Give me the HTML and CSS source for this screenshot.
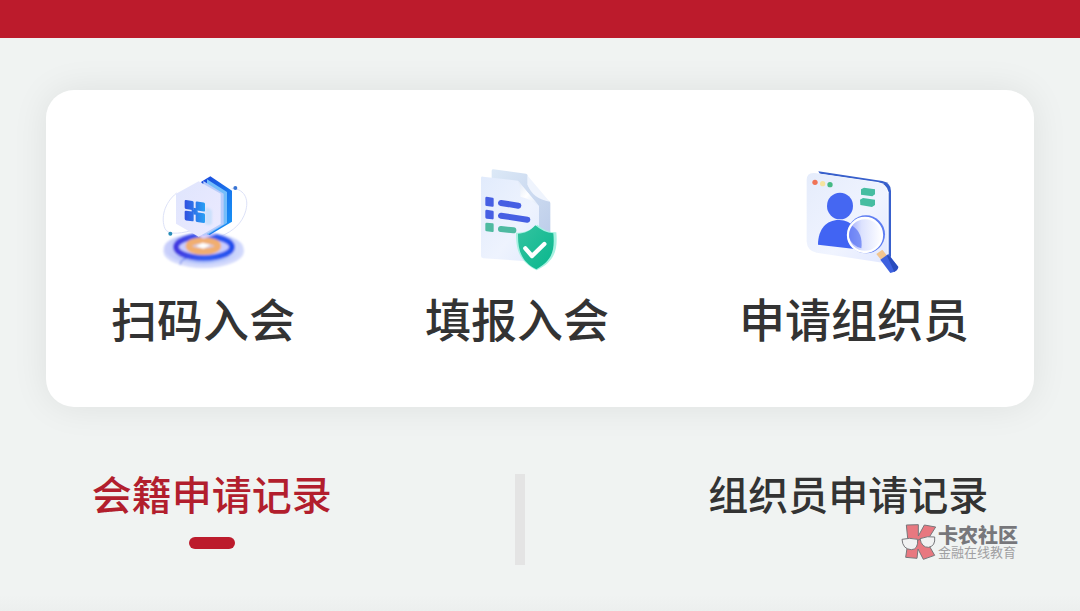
FILE: index.html
```html
<!DOCTYPE html>
<html lang="zh-CN">

<head>
  <meta charset="UTF-8">
  <meta name="viewport" content="width=device-width, initial-scale=1.0">
  <title>入会申请</title>
  <link rel="stylesheet" href="styles.css">
</head>

<body>
  <header class="topbar"></header>

  <main>
    <nav class="menu">
      <a class="menu-item" href="#scan">
        <svg class="menu-icon" viewBox="-6 0 330 330" aria-hidden="true">
          <defs>
            <linearGradient id="disc" x1="0" x2="1">
              <stop offset="0" stop-color="#cbd0fb" />
              <stop offset=".5" stop-color="#a9bdfb" />
              <stop offset="1" stop-color="#d3dafc" />
            </linearGradient>
            <linearGradient id="ring" x1="0" x2="1">
              <stop offset="0" stop-color="#4338e0" />
              <stop offset=".5" stop-color="#3560f0" />
              <stop offset="1" stop-color="#2450ee" />
            </linearGradient>
            <linearGradient id="face" x1="0" y1="0" x2="1" y2="1">
              <stop offset="0" stop-color="#dfe5fd" />
              <stop offset="1" stop-color="#eceaff" />
            </linearGradient>
            <linearGradient id="side" x1="0" y1="0" x2="1" y2="1">
              <stop offset="0" stop-color="#1b45dc" />
              <stop offset="1" stop-color="#179af8" />
            </linearGradient>
            <linearGradient id="tiles" gradientUnits="userSpaceOnUse" x1="104" y1="0" x2="165" y2="0">
              <stop offset="0" stop-color="#3150e0" />
              <stop offset="1" stop-color="#28a0f4" />
            </linearGradient>
            <filter id="soft" x="-20%" y="-20%" width="140%" height="140%">
              <feGaussianBlur stdDeviation="3" />
            </filter>
          </defs>
          <path d="M80 84C42 114 32 160 45 191c8 17 38 17 78 6M245 70c42 2 56 38 37 82-14 32-42 53-88 69" fill="none" stroke="#dde2f8" stroke-width="3" />
          <g filter="url(#soft)">
            <ellipse cx="161" cy="259" rx="121" ry="50" fill="#d4dafc" />
            <ellipse cx="161" cy="250" rx="120" ry="46" fill="url(#disc)" />
            <ellipse cx="162" cy="246" rx="84" ry="33" fill="#c9ccff" stroke="url(#ring)" stroke-width="18" />
            <ellipse cx="160" cy="243" rx="44" ry="17" fill="#d7c9dd" stroke="#f1ae70" stroke-width="19" />
            <path d="M138 243l20-10 23 7-21 11z" fill="#fff" />
            <path d="M91 299c0-12 9-17 22-20" fill="none" stroke="#3b5ce8" stroke-width="3" />
            <path d="M136 207h64l-40 14z" fill="#d6cfff" />
          </g>
          <path d="M181 34l65 43v93l-67 40-25-12V50z" fill="url(#side)" />
          <path d="M171 43l60 38v93l-59 36z" fill="#74bdfa" />
          <path d="M160 48l61 38v92l-61 35z" fill="#b8ccfb" />
          <path d="M146 49l66 37v91l-66 38-68-39V86z" fill="url(#face)" />
          <path d="M166 127q18 3 20 12v38q-10 7-21 0z" fill="#cbe0fc" filter="url(#soft)" />
          <g fill="url(#tiles)" transform="skewY(8) translate(0 -17)">
            <rect x="104" y="107" width="27" height="27" rx="4" />
            <rect x="137" y="107" width="28" height="27" rx="4" />
            <rect x="104" y="139" width="27" height="29" rx="4" />
            <rect x="137" y="139" width="28" height="29" rx="4" />
            <path d="M125 133h18v8h-18z" />
            <path d="M130 127h9v20h-9z" />
          </g>
          <circle cx="256" cy="69" r="6" fill="#3974d3" />
          <circle cx="61" cy="206" r="6" fill="#288db8" />
        </svg>
        <span>扫码入会</span>
      </a>

      <a class="menu-item" href="#fill">
        <svg class="menu-icon" viewBox="-9 15 330 330" aria-hidden="true">
          <defs>
            <linearGradient id="paper" x1="0" y1="0" x2="1" y2="1">
              <stop offset="0" stop-color="#e1ebfc" />
              <stop offset=".6" stop-color="#eef3fe" />
              <stop offset="1" stop-color="#e2ebfd" />
            </linearGradient>
            <linearGradient id="back" x1="0" y1="0" x2="1" y2="1">
              <stop offset="0" stop-color="#dce9f7" />
              <stop offset="1" stop-color="#bccce9" />
            </linearGradient>
            <linearGradient id="shield" x1="0" y1="0" x2="1" y2="1">
              <stop offset="0" stop-color="#35c3a0" />
              <stop offset="1" stop-color="#08b78d" />
            </linearGradient>
            <linearGradient id="fold" x1="0" y1="0" x2="1" y2="1">
              <stop offset="0" stop-color="#dfe8f7" />
              <stop offset=".5" stop-color="#ffffff" />
              <stop offset="1" stop-color="#dce7f8" />
            </linearGradient>
          </defs>
          <path d="M80 32q0-4 5-4l98 13q5 1 5 6v28q20 38 64 48 4 2 4 7v112L80 212z" fill="url(#back)" />
          <path d="M188 47l66 78q-50-8-66-50z" fill="#eff4fd" />
          <path d="M48 54q0-5 6-4l105 12 63 76v168L55 295q-7-1-7-7z" fill="url(#paper)" />
          <path d="M159 62q9 28 7 48 28 5 56 28z" fill="url(#fold)" />
          <g fill="#465fe3">
            <path d="M61 114q0-4 4-4l18 3q3 0 3 4v20q0 4-4 3l-17-2q-4 0-4-4z" />
            <path d="M61 153q0-4 4-4l18 3q3 0 3 4v19q0 4-4 3l-17-2q-4 0-4-4z" />
          </g>
          <path d="M61 192q0-4 4-4l18 2q3 0 3 4v19q0 4-4 3l-17-2q-4 0-4-4z" fill="#4ebaa1" />
          <g fill="none" stroke-linecap="round" stroke-width="18">
            <path d="M108 129l52 8M108 167l79 12" stroke="#465fe3" />
            <path d="M108 207l37 4" stroke="#4ebaa1" />
          </g>
          <path d="M217 194q25 23 57 23c5 56-7 88-59 114-47-24-63-55-62-113 25 0 46-8 64-24z" fill="#a7f1e1" />
          <path d="M211 196q24 22 54 24c5 54-5 82-51 108-43-22-56-54-55-107 20 0 36-8 52-25z" fill="url(#shield)" />
          <path d="M181 265l20 23 37-36" fill="none" stroke="#fff" stroke-width="13" stroke-linecap="round" stroke-linejoin="round" />
        </svg>
        <span>填报入会</span>
      </a>

      <a class="menu-item" href="#organizer">
        <svg class="menu-icon" viewBox="12 15 330 330" aria-hidden="true">
          <defs>
            <linearGradient id="window" x1="0" y1="0" x2="1" y2="1">
              <stop offset="0" stop-color="#e5ecfb" />
              <stop offset=".6" stop-color="#f0f4ff" />
              <stop offset="1" stop-color="#e2e8ff" />
            </linearGradient>
            <linearGradient id="lens" x1="0" y1="0" x2="1" y2="0">
              <stop offset="0" stop-color="#9aa5fb" />
              <stop offset=".4" stop-color="#dce2fe" />
              <stop offset="1" stop-color="#ffffff" />
            </linearGradient>
          </defs>
          <path d="M70 34l192 29q26 5 26 30v193q0 18-14 23l-65-20z" fill="#3860cc" />
          <path d="M56 38l192 28q28 5 33 31v213l-12-3z" fill="#fff" />
          <path d="M35 60q0-24 25-21l191 29q25 5 27 31v188q-1 24-25 20L65 278q-28-5-30-33z" fill="url(#window)" />
          <circle cx="60" cy="67" r="8" fill="#f07356" />
          <circle cx="83" cy="71" r="8" fill="#f6e4a0" />
          <circle cx="105" cy="74" r="8" fill="#45b983" />
          <path d="M198 88l9-5 33 5v15l-8 6-34-5zM195 119l9-5 36 5v16l-9 6-35-6z" fill="#46bda1" />
          <ellipse cx="135" cy="138" rx="39" ry="40" fill="#4567f2" />
          <path d="M69 254c0-47 26-75 64-74 38 1 65 32 66 89z" fill="#4164f3" />
          <circle cx="213" cy="223" r="57" fill="#5e7df2" />
          <circle cx="210" cy="225" r="51" fill="url(#lens)" stroke="#fff" stroke-width="7" />
          <path d="M172 197q33 22 27 68-29-8-37-34-1-20 10-34z" fill="#4f6bf2" opacity=".65" />
          <path d="M244 282l18-13 16 20-17 14z" fill="#f3c58f" />
          <path d="M256 299l24-17 30 39q-1 14-24 18z" fill="#3e61df" />
          <path d="M275 285l8 3 27 33q-3 10-12 15z" fill="#294cbd" />
        </svg>
        <span>申请组织员</span>
      </a>
    </nav>

    <div class="tabs" role="tablist">
      <button class="tab active" role="tab" aria-selected="true">会籍申请记录</button>
      <span class="divider"></span>
      <button class="tab" role="tab" aria-selected="false">组织员申请记录</button>
    </div>

    <div class="fade"></div>
  </main>

  <aside class="watermark">
    <svg class="watermark-logo" viewBox="30 38 108 111" aria-hidden="true">
      <path d="M46 44l36-1v34l18-33 34 6-27 43 24 42-34 12-16-31-3 28-34-3 7-47z" fill="#e87880" stroke="#77777b" stroke-width="3" stroke-linejoin="round" />
      <g fill="#f1f2f2" stroke="#77777b" stroke-width="3">
        <path d="M33 87q22-6 47 0 2 31-19 31-26-1-28-31z" />
        <path d="M87 85q23-9 44-5 3 27-18 31-21 1-26-26z" />
        <path d="M79 90l9-3" />
      </g>
    </svg>
    <div>
      <strong>卡农社区</strong>
      <small>金融在线教育</small>
    </div>
  </aside>
</body>

</html>
```
FILE: styles.css
```css
body {
  margin: 0;
  position: relative;
  background: #f0f3f2;
  color: #333;
  font-family: "Noto Sans CJK SC", sans-serif;
}

.topbar {
  height: 38px;
  background: #bc1b2c;
}

.menu {
  display: flex;
  justify-content: space-around;
  margin: 52px 46px 0;
  padding: 75px 0 67px;
  border-radius: 28px;
  background: #fff;
  box-shadow: 0 0 36px rgba(0, 0, 0, .08);
}

.menu-item {
  display: flex;
  flex-direction: column;
  align-items: center;
  gap: 19px;
  color: inherit;
  font-size: 46px;
  font-weight: 500;
  line-height: 46px;
  text-decoration: none;
}

.menu-icon {
  width: 110px;
  height: 110px;
}

.tabs {
  display: flex;
  justify-content: space-around;
  padding: 67px 0 30px;
}

.tab {
  display: flex;
  flex-direction: column;
  align-items: center;
  gap: 25px;
  padding: 0;
  border: 0;
  background: none;
  color: inherit;
  font: 500 40px/38px "Noto Sans CJK SC", sans-serif;
  cursor: pointer;
}

.tab.active {
  color: #b21e2d;
}

.tab.active::after {
  content: "";
  width: 46px;
  height: 12px;
  border-radius: 6px;
  background: #bc1b2c;
}

.divider {
  width: 10px;
  height: 91px;
  background: #e4e4e4;
}

.fade {
  height: 16px;
  background: linear-gradient(#f0f3f2, #ecefee);
}

/* sits over the page */
.watermark {
  position: absolute;
  right: 62px;
  bottom: 51px;
  display: flex;
  align-items: center;
  gap: 1px;
  color: #77777b;
}

.watermark-logo {
  width: 36px;
  height: 37px;
}

.watermark strong,
.watermark small {
  display: block;
}

.watermark strong {
  font-size: 20px;
  font-weight: 900;
  line-height: 20px;
}

.watermark small {
  color: #a0a0a2;
  font-size: 13px;
  line-height: 14px;
}
```
